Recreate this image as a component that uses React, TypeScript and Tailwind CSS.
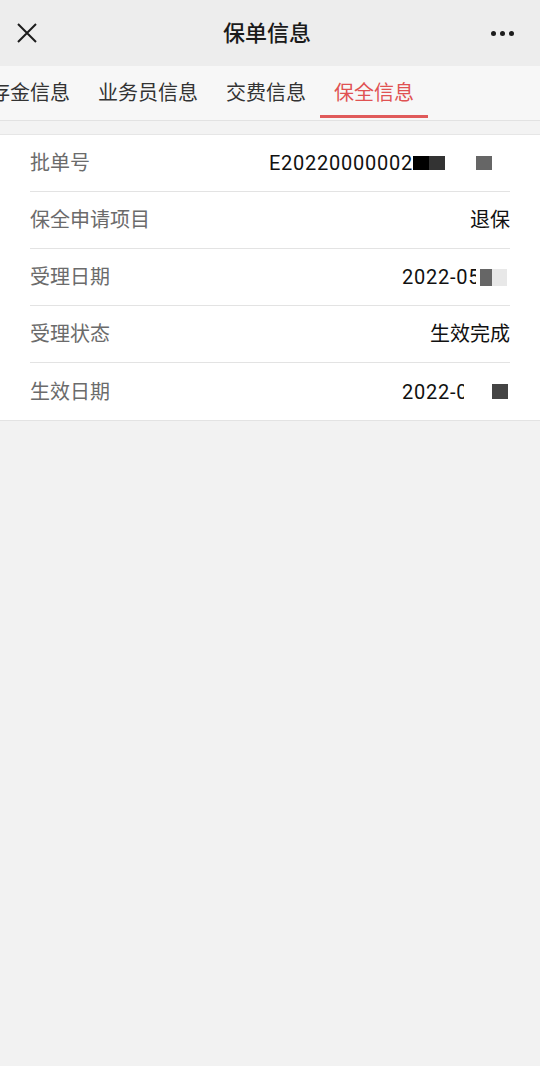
import React from 'react';

const tabs = ['存金信息', '业务员信息', '交费信息', '保全信息'];

function Row({ label, children, last }: { label: string; children: React.ReactNode; last?: boolean }) {
  return (
    <div className={`mx-[30px] flex h-[57px] items-center justify-between ${last ? '' : 'border-b border-[#e3e3e3]'}`}>
      <span className="text-[20px] text-[#6b6b6b]">{label}</span>
      <div className="flex items-center text-[20px] text-[#111]">{children}</div>
    </div>
  );
}

export default function App() {
  return (
    <div
      className="flex min-h-[1066px] w-[540px] flex-col bg-[#f2f2f2]"
      style={{ fontFamily: 'Roboto, "Noto Sans CJK SC", sans-serif' }}
    >
      {/* title bar */}
      <div className="flex h-[66px] items-center justify-between bg-[#ededed] px-[17px]">
        <svg width="20" height="20" viewBox="0 0 20 20" fill="none" stroke="#1c1c1c" strokeWidth="2">
          <path d="M1 1L19 19M19 1L1 19" />
        </svg>
        <span className="ml-[6px] text-[22px] font-medium text-[#1a1a1a]">保单信息</span>
        <div className="mr-[9px] flex gap-[4px]">
          <span className="h-[5px] w-[5px] rounded-full bg-[#1c1c1c]" />
          <span className="h-[5px] w-[5px] rounded-full bg-[#1c1c1c]" />
          <span className="h-[5px] w-[5px] rounded-full bg-[#1c1c1c]" />
        </div>
      </div>

      {/* tabs */}
      <div className="flex h-[55px] overflow-hidden border-b border-[#e2e2e2] bg-[#f7f7f7]">
        <div className="ml-[-24px] flex">
          {tabs.map((t, i) => {
            const active = i === tabs.length - 1;
            return (
              <div key={t} className="relative flex items-center px-[14px]">
                <span className={`text-[20px] ${active ? 'text-[#e05252]' : 'text-[#333]'}`}>{t}</span>
                {active && <span className="absolute bottom-[2px] left-0 right-0 h-[3px] bg-[#e05a5a]" />}
              </div>
            );
          })}
        </div>
      </div>

      <div className="h-[14px] border-b border-[#e6e6e6] bg-[#f3f3f3]" />

      {/* detail card */}
      <div className="border-b border-[#e3e3e3] bg-white">
        <Row label="批单号">
          <span className="tracking-[0.75px]">E20220000002</span>
          <span className="h-[14px] w-[16px] bg-black" />
          <span className="h-[14px] w-[16px] bg-[#333]" />
          <span className="ml-[31px] h-[14px] w-[16px] bg-[#666]" />
          <span className="w-[18px]" />
        </Row>
        <Row label="保全申请项目">
          <span>退保</span>
        </Row>
        <Row label="受理日期">
          <span className="w-[74px] overflow-hidden whitespace-nowrap tracking-[0.75px]">2022-05</span>
          <span className="ml-[4px] h-[17px] w-[12px] bg-[#666]" />
          <span className="h-[17px] w-[15px] bg-[#e8e8e8]" />
          <span className="w-[3px]" />
        </Row>
        <Row label="受理状态">
          <span>生效完成</span>
        </Row>
        <Row label="生效日期" last>
          <span className="w-[62px] overflow-hidden whitespace-nowrap tracking-[0.75px]">2022-08</span>
          <span className="ml-[28px] h-[15px] w-[16px] bg-[#444]" />
          <span className="w-[2px]" />
        </Row>
      </div>
    </div>
  );
}
